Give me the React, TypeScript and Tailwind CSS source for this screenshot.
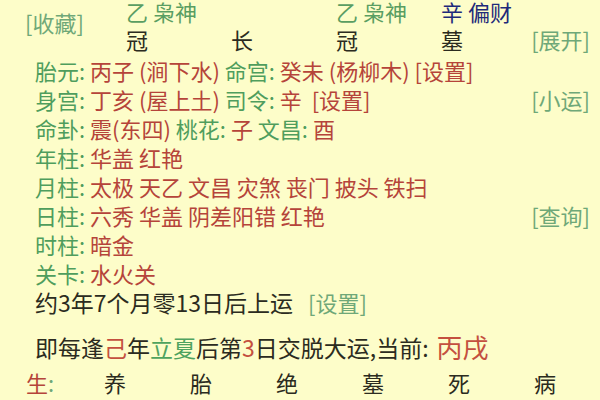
import React from 'react';

const font = { fontFamily: '"Noto Sans CJK SC", "Noto Sans", sans-serif' };

type Part = { t: string; c?: 'g' | 'r' | 'd' };

const colorOf = (c?: string) => {
  if (c === 'g') return 'text-[#4f9d5d]';
  if (c === 'd') return 'text-[#2b2b20]';
  return 'text-[#b5443a]';
};

const InfoLine = ({ parts, right }: { parts: Part[]; right?: string }) => (
  <div className="flex h-[29px] items-center pl-[35px] pr-[10px] leading-[29px]">
    <div className="whitespace-pre">
      {parts.map((p, i) => (
        <span key={i} className={colorOf(p.c)}>
          {p.t}
        </span>
      ))}
    </div>
    {right && <span className="ml-auto text-[#6fa878]">{right}</span>}
  </div>
);

const topCells = [
  { t: '乙 枭神', c: 'text-[#5a9e62]' },
  { t: '', c: '' },
  { t: '乙 枭神', c: 'text-[#5a9e62]' },
  { t: '辛 偏财', c: 'text-[#1e2a7a]' },
];

const stages = ['冠', '长', '冠'];
const bottom = ['养', '胎', '绝', '墓', '死', '病'];

export default function App() {
  return (
    <div
      className="h-[400px] w-[600px] overflow-hidden bg-[#fdfdc9] text-[22px]"
      style={font}
    >
      {/* 顶部 */}
      <div className="flex h-[56px]">
        <div className="flex w-[126px] shrink-0 items-center pb-[12px] pl-[25px] text-[#6fa878]">
          [收藏]
        </div>
        <div className="flex min-w-0 flex-1 flex-col">
          <div className="flex h-[22px] items-center leading-[22px]">
            {topCells.map((c, i) => (
              <div key={i} className={`w-[105px] shrink-0 whitespace-pre ${c.c}`}>
                {c.t}
              </div>
            ))}
          </div>
          <div className="flex h-[34px] items-center leading-[34px]">
            {stages.map((s, i) => (
              <div key={i} className="w-[105px] shrink-0 text-[#2b2b20]">
                {s}
              </div>
            ))}
            <div className="text-[#2b2b20]">墓</div>
            <span className="ml-auto shrink-0 whitespace-nowrap pr-[10px] text-[#6fa878]">
              [展开]
            </span>
          </div>
        </div>
      </div>

      <InfoLine
        parts={[
          { t: '胎元: ', c: 'g' },
          { t: '丙子 (涧下水) ' },
          { t: '命宫: ', c: 'g' },
          { t: '癸未 (杨柳木) [设置]' },
        ]}
      />
      <InfoLine
        parts={[
          { t: '身宫: ', c: 'g' },
          { t: '丁亥 (屋上土) ' },
          { t: '司令: ', c: 'g' },
          { t: '辛  [设置]' },
        ]}
        right="[小运]"
      />
      <InfoLine
        parts={[
          { t: '命卦: ', c: 'g' },
          { t: '震(东四) ' },
          { t: '桃花: ', c: 'g' },
          { t: '子 ' },
          { t: '文昌: ', c: 'g' },
          { t: '酉' },
        ]}
      />
      <InfoLine parts={[{ t: '年柱: ', c: 'g' }, { t: '华盖 红艳' }]} />
      <InfoLine
        parts={[{ t: '月柱: ', c: 'g' }, { t: '太极 天乙 文昌 灾煞 丧门 披头 铁扫' }]}
      />
      <InfoLine
        parts={[{ t: '日柱: ', c: 'g' }, { t: '六秀 华盖 阴差阳错 红艳' }]}
        right="[查询]"
      />
      <InfoLine parts={[{ t: '时柱: ', c: 'g' }, { t: '暗金' }]} />
      <InfoLine parts={[{ t: '关卡: ', c: 'g' }, { t: '水火关' }]} />

      <div className="flex h-[29px] items-center pl-[35px] text-[23px] leading-[29px]">
        <span className="text-[#2b2b20]">约3年7个月零13日后上运</span>
        <span className="ml-[15px] text-[22px] text-[#6fa878]">[设置]</span>
      </div>

      <div className="flex h-[52px] items-center pl-[35px] pt-[8px] text-[23px] leading-[44px] text-[#2b2b20]">
        <span>即每逢</span>
        <span className="text-[#c4503f]">己</span>
        <span>年</span>
        <span className="text-[#4fa35f]">立夏</span>
        <span>后第</span>
        <span className="text-[#c4503f]">3</span>
        <span>日交脱大运,当前:</span>
        <span className="ml-[8px] text-[26px] text-[#c4503f]">丙戌</span>
      </div>

      <div className="flex h-[26px] items-center pl-[26px] leading-[26px] text-[#2b2b20]">
        <div className="w-[78px] shrink-0">
          <span className="text-[#b5443a]">生</span>
          <span className="text-[#6fa878]">:</span>
        </div>
        {bottom.map((b, i) => (
          <div key={i} className="w-[86px] shrink-0">
            {b}
          </div>
        ))}
      </div>
    </div>
  );
}
